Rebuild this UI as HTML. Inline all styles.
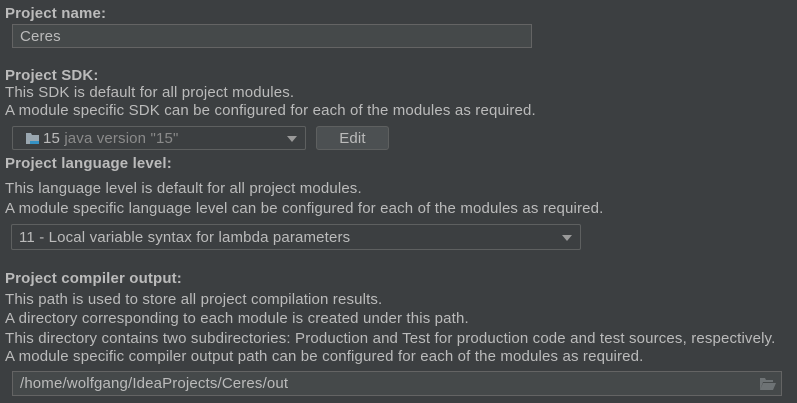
<!DOCTYPE html>
<html><head><meta charset="utf-8"><style>
html,body{margin:0;padding:0;width:797px;height:403px;overflow:hidden;background:#3c3f41;}
body{position:relative;font-family:"Liberation Sans",sans-serif;font-size:15px;letter-spacing:0.15px;color:#bbbbbb;}
.t{position:absolute;left:5px;line-height:18px;white-space:nowrap;}
.b{font-weight:bold;}
.f{position:absolute;box-sizing:border-box;border:1px solid #646464;background:#45494a;line-height:23px;padding-left:7px;white-space:nowrap;}
.c{background:#3c3f41;border-color:#5e6060;border-radius:2px;}
.arr{position:absolute;right:8px;top:9px;width:0;height:0;border-left:5px solid transparent;border-right:5px solid transparent;border-top:6px solid #9a9a9a;}
</style></head><body>
<div class="t b" style="top:5px">Project name:</div>
<div class="f" style="left:12px;top:24px;width:520px;height:24px">Ceres</div>
<div class="t b" style="top:67px">Project SDK:</div>
<div class="t" style="top:84px">This SDK is default for all project modules.</div>
<div class="t" style="top:102px">A module specific SDK can be configured for each of the modules as required.</div>
<div class="f c" style="left:12px;top:126px;width:294px;height:24px;padding-left:12px">
<svg width="16" height="14" viewBox="0 0 16 14" style="position:absolute;left:13px;top:5px"><path d="M0 1h5l1 2h7v9H0z" fill="#9aa7b0"/><path d="M4 9h9v3H4z" fill="#3592c4"/></svg>
<span style="margin-left:18px">15</span> <span style="color:#8a8a8a">java version "15"</span><div class="arr"></div></div>
<div class="f" style="left:316px;top:126px;width:73px;height:24px;background:#4c5052;border-color:#5e6060;border-radius:3px;text-align:center;padding:0">Edit</div>
<div class="t b" style="top:155px">Project language level:</div>
<div class="t" style="top:180px">This language level is default for all project modules.</div>
<div class="t" style="top:200px">A module specific language level can be configured for each of the modules as required.</div>
<div class="f c" style="left:11px;top:224px;width:570px;height:26px;line-height:25px">11 - Local variable syntax for lambda parameters<div class="arr" style="top:10px"></div></div>
<div class="t b" style="top:270px">Project compiler output:</div>
<div class="t" style="top:291px">This path is used to store all project compilation results.</div>
<div class="t" style="top:310px">A directory corresponding to each module is created under this path.</div>
<div class="t" style="top:330px">This directory contains two subdirectories: Production and Test for production code and test sources, respectively.</div>
<div class="t" style="top:348px">A module specific compiler output path can be configured for each of the modules as required.</div>
<div class="f" style="left:12px;top:371px;width:770px;height:25px">/home/wolfgang/IdeaProjects/Ceres/out
<svg width="16" height="12" viewBox="0 0 16 12" style="position:absolute;right:5px;top:6px"><path d="M0 0h5l1 2h7v2H3L0 12z" fill="#6e7375"/><path d="M3 5h13l-3 7H0z" fill="#6e7375"/></svg></div>
</body></html>
